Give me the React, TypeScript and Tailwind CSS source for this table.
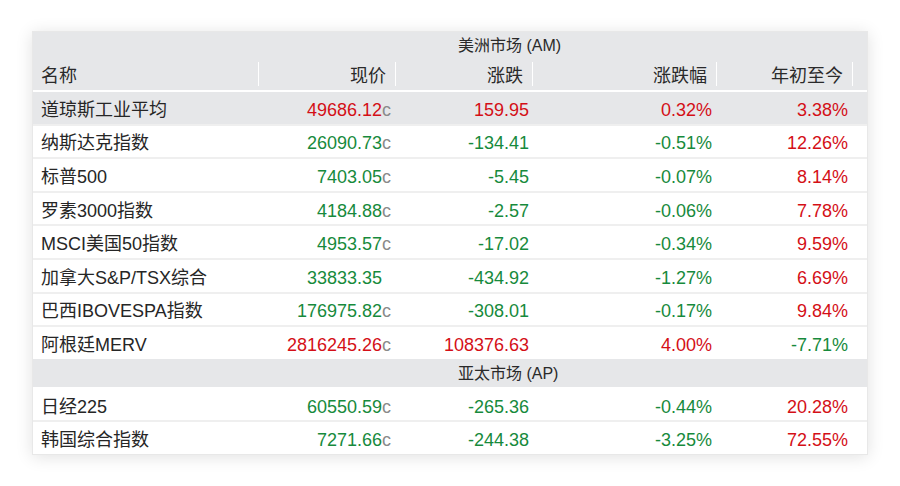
import React from "react";

type Quote = {
  name: string;
  price: string;
  c: boolean;
  change: string;
  pct: string;
  ytd: string;
  highlight?: boolean;
};

const americas: Quote[] = [
  { name: "道琼斯工业平均", price: "49686.12", c: true, change: "159.95", pct: "0.32%", ytd: "3.38%", highlight: true },
  { name: "纳斯达克指数", price: "26090.73", c: true, change: "-134.41", pct: "-0.51%", ytd: "12.26%" },
  { name: "标普500", price: "7403.05", c: true, change: "-5.45", pct: "-0.07%", ytd: "8.14%" },
  { name: "罗素3000指数", price: "4184.88", c: true, change: "-2.57", pct: "-0.06%", ytd: "7.78%" },
  { name: "MSCI美国50指数", price: "4953.57", c: true, change: "-17.02", pct: "-0.34%", ytd: "9.59%" },
  { name: "加拿大S&P/TSX综合", price: "33833.35", c: false, change: "-434.92", pct: "-1.27%", ytd: "6.69%" },
  { name: "巴西IBOVESPA指数", price: "176975.82", c: true, change: "-308.01", pct: "-0.17%", ytd: "9.84%" },
  { name: "阿根廷MERV", price: "2816245.26", c: true, change: "108376.63", pct: "4.00%", ytd: "-7.71%" },
];

const asiaPacific: Quote[] = [
  { name: "日经225", price: "60550.59", c: true, change: "-265.36", pct: "-0.44%", ytd: "20.28%" },
  { name: "韩国综合指数", price: "7271.66", c: true, change: "-244.38", pct: "-3.25%", ytd: "72.55%" },
];

const cols = "grid grid-cols-[226px_137px_137px_184px_136px_14px]";

function tone(v: string) {
  return v.startsWith("-") ? "text-[#178a3c]" : "text-[#d40f17]";
}

function SectionHeader({ title, h }: { title: string; h: string }) {
  return (
    <div className={`${h} bg-[#e6e7e9] flex items-center pl-[425px] pt-[2px] text-[16px] text-[#2a2a2a]`}>
      {title}
    </div>
  );
}

function HeadCell({ label, left }: { label: string; left?: boolean }) {
  return (
    <div className="h-full py-[4px]">
      <div
        className={`h-full border-r border-white flex items-center pt-[3px] ${
          left ? "justify-start pl-2" : "justify-end pr-[9px]"
        }`}
      >
        {label}
      </div>
    </div>
  );
}

function Row({ q, first }: { q: Quote; first?: boolean }) {
  // price colour follows the day's change
  const priceTone = tone(q.change);
  return (
    <div
      className={`${cols} h-[33.6px] border-t-2 ${first ? "border-white" : "border-[#efefef]"} ${
        q.highlight ? "bg-[#e6e7e9]" : "bg-white"
      } text-[18px] leading-none`}
    >
      <div className="flex items-center pl-2 pt-[4px] text-[#262626]">{q.name}</div>
      <div className="flex items-center justify-end pr-1 pt-[4px]">
        <span className={priceTone}>{q.price}</span>
        <span className="w-[10px] text-[#8a8a8a]">{q.c ? "c" : ""}</span>
      </div>
      <div className={`flex items-center justify-end pr-1 pt-[4px] ${tone(q.change)}`}>{q.change}</div>
      <div className={`flex items-center justify-end pr-[5px] pt-[4px] ${tone(q.pct)}`}>{q.pct}</div>
      <div className={`flex items-center justify-end pr-[5px] pt-[4px] ${tone(q.ytd)}`}>{q.ytd}</div>
      <div />
    </div>
  );
}

export default function App() {
  return (
    <div
      className="w-[900px] h-[486px] bg-white pt-[31px] pl-[32px]"
      style={{ fontFamily: '"Liberation Sans", "Noto Sans CJK SC", sans-serif' }}
    >
      <div className="w-[836px] border border-[#e8e8e8] shadow-[0_2px_16px_rgba(0,0,0,0.12)]">
        <SectionHeader title="美洲市场 (AM)" h="h-[26px]" />
        <div className={`${cols} h-[32px] bg-[#e6e7e9] text-[18px] text-[#2a2a2a] leading-none`}>
          <HeadCell label="名称" left />
          <HeadCell label="现价" />
          <HeadCell label="涨跌" />
          <HeadCell label="涨跌幅" />
          <HeadCell label="年初至今" />
          <div />
        </div>
        {americas.map((q, i) => (
          <Row key={q.name} q={q} first={i === 0} />
        ))}
        <SectionHeader title="亚太市场 (AP)" h="h-[28px]" />
        {asiaPacific.map((q, i) => (
          <Row key={q.name} q={q} first={i === 0} />
        ))}
      </div>
    </div>
  );
}
